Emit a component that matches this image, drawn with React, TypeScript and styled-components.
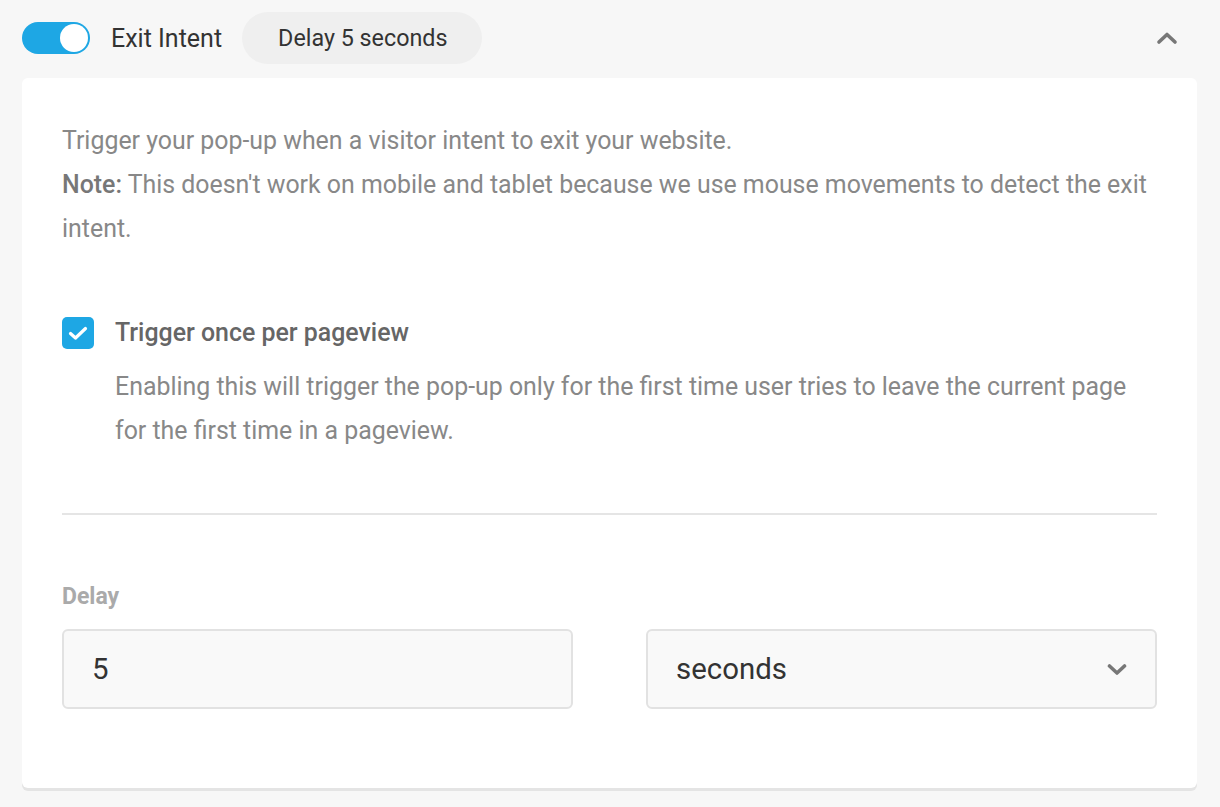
import React from "react";
import styled, { createGlobalStyle } from "styled-components";

const Global = createGlobalStyle`
  html, body { margin: 0; padding: 0; background: #f7f7f7; }
  body { font-family: Roboto, "Noto Sans", Arial, sans-serif; -webkit-font-smoothing: antialiased; }
`;

const Page = styled.div`
  padding: 12px 23px 17px 22px;
  display: flex;
  flex-direction: column;
  gap: 14px;
`;

const Header = styled.div`
  display: flex;
  align-items: center;
  height: 52px;
`;

const Toggle = styled.div<{ $on: boolean }>`
  width: 68px;
  height: 32px;
  border-radius: 16px;
  background: ${(p) => (p.$on ? "#1ea7e4" : "#ccc")};
  display: flex;
  align-items: center;
  justify-content: ${(p) => (p.$on ? "flex-end" : "flex-start")};
  padding: 0 2px;
  box-sizing: border-box;
  flex-shrink: 0;
`;

const Thumb = styled.div`
  width: 28px;
  height: 28px;
  border-radius: 50%;
  background: #fff;
`;

const Title = styled.span`
  margin-left: 21px;
  font-size: 25px;
  color: #333;
  font-weight: 400;
`;

const Badge = styled.span`
  margin-left: 20px;
  height: 52px;
  padding: 0 35px 0 36px;
  border-radius: 26px;
  background: #efefef;
  display: inline-flex;
  align-items: center;
  font-size: 23.3px;
  color: #333;
  font-weight: 400;
`;

const Collapse = styled.button`
  margin-left: auto;
  margin-right: 19px;
  border: none;
  background: transparent;
  padding: 0;
  display: flex;
  align-items: center;
  cursor: pointer;
`;

const Card = styled.div`
  background: #fff;
  border-radius: 6px;
  box-shadow: 0 3px 0 #e4e4e4;
  padding: 41px 40px 79px 40px;
`;

const Para = styled.p`
  margin: 0;
  font-size: 24.9px;
  line-height: 44px;
  color: #888;
`;

const Strong = styled.span`
  font-weight: 500;
  color: #777;
`;

const OptionRow = styled.div`
  margin-top: 60px;
  display: grid;
  grid-template-columns: 32px 1fr;
  column-gap: 21px;
  row-gap: 10px;
`;

const Check = styled.div`
  width: 32px;
  height: 32px;
  border-radius: 5px;
  background: #1ea7e4;
  display: flex;
  align-items: center;
  justify-content: center;
  align-self: center;
`;

const OptionLabel = styled.div`
  font-size: 24.9px;
  line-height: 44px;
  font-weight: 500;
  color: #666;
`;

const OptionDesc = styled(Para)`
  grid-column: 2;
`;

const Divider = styled.hr`
  margin: 60px 0 0 0;
  border: none;
  height: 2px;
  background: #e5e5e5;
`;

const FieldLabel = styled.div`
  margin-top: 67px;
  font-size: 23px;
  line-height: 30px;
  font-weight: 700;
  color: #aaa;
`;

const Fields = styled.div`
  margin-top: 17px;
  display: grid;
  grid-template-columns: 1fr 1fr;
  column-gap: 73px;
`;

const Field = styled.div`
  height: 80px;
  box-sizing: border-box;
  border: 2px solid #e2e2e2;
  border-radius: 6px;
  background: #f9f9f9;
  display: flex;
  align-items: center;
  justify-content: space-between;
  padding: 0 28px 0 28px;
  font-size: 29.4px;
  color: #333;
`;

export default function App() {
  return (
    <>
      <Global />
      <Page>
        <Header>
          <Toggle $on>
            <Thumb />
          </Toggle>
          <Title>Exit Intent</Title>
          <Badge>Delay 5 seconds</Badge>
          <Collapse aria-label="collapse">
            <svg width="22" height="14" viewBox="0 0 22 14">
              <path d="M3 11 L11 3.5 L19 11" fill="none" stroke="#777" strokeWidth="3.6" strokeLinecap="round" strokeLinejoin="round" />
            </svg>
          </Collapse>
        </Header>
        <Card>
          <Para>Trigger your pop-up when a visitor intent to exit your website.</Para>
          <Para>
            <Strong>Note:</Strong> This doesn't work on mobile and tablet because we use mouse movements to detect the exit intent.
          </Para>
          <OptionRow>
            <Check>
              <svg width="20" height="15" viewBox="0 0 20 15">
                <path d="M2.5 7.5 L7.5 12 L17.5 2.5" fill="none" stroke="#fff" strokeWidth="3.2" strokeLinecap="round" strokeLinejoin="round" />
              </svg>
            </Check>
            <OptionLabel>Trigger once per pageview</OptionLabel>
            <OptionDesc>
              Enabling this will trigger the pop-up only for the first time user tries to leave the current page for the first time in a pageview.
            </OptionDesc>
          </OptionRow>
          <Divider />
          <FieldLabel>Delay</FieldLabel>
          <Fields>
            <Field>5</Field>
            <Field>
              <span>seconds</span>
              <svg width="20" height="13" viewBox="0 0 20 13">
                <path d="M2.5 3 L10 10 L17.5 3" fill="none" stroke="#777" strokeWidth="3.6" strokeLinecap="round" strokeLinejoin="round" />
              </svg>
            </Field>
          </Fields>
        </Card>
      </Page>
    </>
  );
}
